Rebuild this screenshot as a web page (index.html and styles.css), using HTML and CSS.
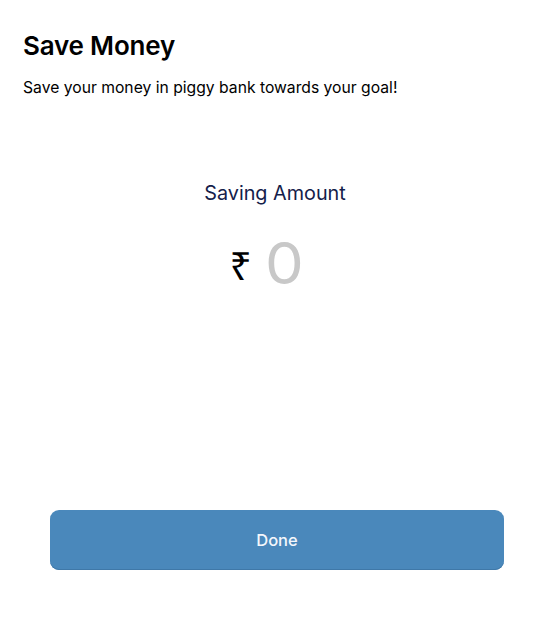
FILE: index.html
```html
<!DOCTYPE html>
<html>
<head>
<meta charset="utf-8">
<link rel="stylesheet" href="styles.css">
</head>
<body>
<div class="screen">
  <header class="head">
    <h1 class="title">Save Money</h1>
    <p class="subtitle">Save your money in piggy bank towards your goal!</p>
  </header>
  <section class="amount">
    <div class="amount-label">Saving Amount</div>
    <div class="amount-row">
      <span class="currency">₹</span>
      <span class="value">0</span>
    </div>
  </section>
  <div class="actions">
    <button class="done">Done</button>
  </div>
</div>
</body>
</html>
```

FILE: styles.css
```css
* { box-sizing: border-box; }
html, body { margin: 0; padding: 0; background: #ffffff; }
body { font-family: Inter, "Noto Sans", sans-serif; color: #000; }
.screen {
  width: 550px;
  height: 622px;
  display: flex;
  flex-direction: column;
}
.head { padding: 30px 23px 0 23px; }
.title {
  margin: 0;
  font-size: 26px;
  font-weight: 600;
  line-height: 32px;
  letter-spacing: -0.2px;
}
.subtitle {
  margin: 16px 0 0 0;
  font-size: 15.7px;
  line-height: 20px;
  font-weight: 400;
}
.amount {
  margin-top: 83px;
  display: flex;
  flex-direction: column;
  align-items: center;
}
.amount-label {
  font-size: 19.8px;
  line-height: 24px;
  color: #14204a;
}
.amount-row {
  margin-top: 27px;
  display: flex;
  align-items: center;
  gap: 14px;
  padding-right: 18px;
}
.currency {
  font-family: "Noto Sans", "DejaVu Sans", sans-serif;
  font-size: 39px;
  line-height: 44px;
  font-weight: 400;
  color: #000;
  padding-top: 4px;
}
.value {
  font-size: 58px;
  line-height: 62px;
  color: #c8c8c8;
  font-weight: 400;
  transform: scaleX(1.06);
}
.actions {
  margin-top: auto;
  padding: 0 46px 52px 50px;
}
.done {
  width: 454px;
  height: 60px;
  border: none;
  border-radius: 9px;
  background: #4a88bb;
  box-shadow: inset 0 -1px 0 #3f78a8;
  color: #f4f7fb;
  font-family: Inter, "Noto Sans", sans-serif;
  font-size: 16.5px;
  font-weight: 500;
}
```
